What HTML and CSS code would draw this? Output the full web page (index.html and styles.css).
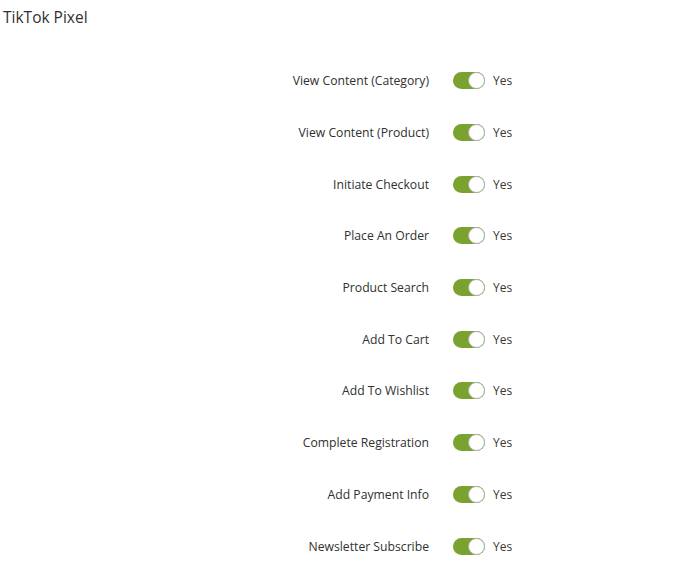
FILE: index.html
```html
<!DOCTYPE html>
<html lang="en">
<head>
  <meta charset="UTF-8">
  <title>TikTok Pixel</title>
  <link rel="stylesheet" href="styles.css">
</head>
<body>
  <div class="section">
    <h3 class="title">TikTok Pixel</h3>

    <div class="rows">
      <div class="row"><span class="label">View Content (Category)</span><span class="switch"></span><span class="value">Yes</span></div>
      <div class="row"><span class="label">View Content (Product)</span><span class="switch"></span><span class="value">Yes</span></div>
      <div class="row"><span class="label">Initiate Checkout</span><span class="switch"></span><span class="value">Yes</span></div>
      <div class="row"><span class="label">Place An Order</span><span class="switch"></span><span class="value">Yes</span></div>
      <div class="row"><span class="label">Product Search</span><span class="switch"></span><span class="value">Yes</span></div>
      <div class="row"><span class="label">Add To Cart</span><span class="switch"></span><span class="value">Yes</span></div>
      <div class="row"><span class="label">Add To Wishlist</span><span class="switch"></span><span class="value">Yes</span></div>
      <div class="row"><span class="label">Complete Registration</span><span class="switch"></span><span class="value">Yes</span></div>
      <div class="row"><span class="label">Add Payment Info</span><span class="switch"></span><span class="value">Yes</span></div>
      <div class="row"><span class="label">Newsletter Subscribe</span><span class="switch"></span><span class="value">Yes</span></div>
    </div>
  </div>
</body>
</html>
```

FILE: styles.css
```css
body {
  margin: 0;
  background: #fff;
  font-family: "Open Sans", Arial, sans-serif;
  color: #303030;
}
.section {
  padding: 6px 0 0 3px;
}
.title {
  margin: 0;
  font-size: 15.5px;
  font-weight: 400;
  color: #303030;
  line-height: 22px;
}
.rows {
  margin-top: 27px;
}
.row {
  display: flex;
  align-items: center;
  height: 51.7px;
}
.label {
  width: 426px;
  text-align: right;
  font-size: 12.2px;
  color: #303030;
}
.switch {
  position: relative;
  margin-left: 24px;
  width: 32px;
  height: 17px;
  border-radius: 9px;
  background: #79a22e;
  box-sizing: border-box;
}
.switch::after {
  content: "";
  position: absolute;
  right: 0;
  top: 0;
  width: 17px;
  height: 17px;
  border-radius: 50%;
  background: #fff;
  border: 1px solid #adadad;
  box-sizing: border-box;
}
.value {
  margin-left: 8px;
  font-size: 12px;
  color: #41362f;
}
```
